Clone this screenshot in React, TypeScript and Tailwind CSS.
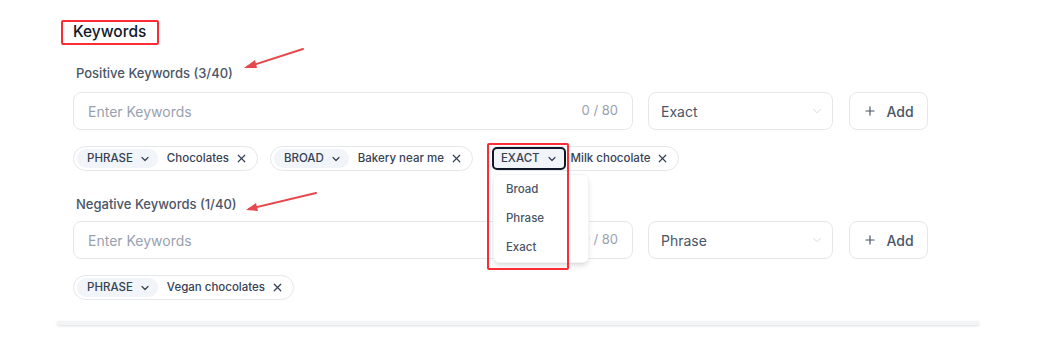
import { ChevronDown, Plus, X } from "lucide-react"

type Chip = { match: string; text: string; focused?: boolean }

const positive: Chip[] = [
  { match: "PHRASE", text: "Chocolates" },
  { match: "BROAD", text: "Bakery near me" },
  { match: "EXACT", text: "Milk chocolate", focused: true },
]

const negative: Chip[] = [{ match: "PHRASE", text: "Vegan chocolates" }]

function KeywordChip({ chip }: { chip: Chip }) {
  return (
    <div
      className={`relative flex h-[25px] items-center rounded-full border border-gray-200 bg-white pr-[9px] ${
        chip.focused ? "pl-[4px]" : "pl-[3px]"
      }`}
    >
      {chip.focused ? (
        <div className="flex h-[23px] items-center gap-[6px] rounded-[5px] border-2 border-gray-900 bg-[#f1f4f9] pl-[7px] pr-[6px] text-[11.5px] font-medium text-gray-700">
          {chip.match}
          <ChevronDown className="h-[12px] w-[12px]" strokeWidth={2.4} />
        </div>
      ) : (
        <div className="flex h-[19px] items-center gap-[6px] rounded-full bg-[#f1f4f9] pl-[10px] pr-[7px] text-[11.5px] font-medium text-gray-700">
          {chip.match}
          <ChevronDown className="h-[12px] w-[12px]" strokeWidth={2.4} />
        </div>
      )}
      <span className={`${chip.focused ? "ml-[5px]" : "ml-[9px]"} text-[11.5px] font-medium text-gray-700`}>{chip.text}</span>
      <X className="ml-[6px] h-[13px] w-[13px] text-gray-700" strokeWidth={2.2} />
      {chip.focused && (
        <div className="absolute left-[5px] top-[27px] z-10 w-[96px] rounded-md border border-gray-100 bg-white shadow-md">
          {["Broad", "Phrase", "Exact"].map((o) => (
            <div key={o} className="flex h-[29px] items-center pl-[12px] text-[11.5px] font-medium text-gray-600">
              {o}
            </div>
          ))}
        </div>
      )}
    </div>
  )
}

function KeywordInput({ value }: { value: string }) {
  return (
    <div className="flex gap-[15px]">
      <div className="flex h-[38px] w-[560px] items-center justify-between rounded-lg border border-gray-200 px-[14px]">
        <span className="text-[14px] text-gray-400">Enter Keywords</span>
        <span className="text-[13px] text-gray-400">0 / 80</span>
      </div>
      <div className="flex h-[38px] w-[185px] items-center justify-between rounded-lg border border-gray-200 pl-[12px] pr-[8px]">
        <span className="text-[14px] text-gray-600">{value}</span>
        <ChevronDown className="h-[14px] w-[14px] text-gray-300" strokeWidth={1.5} />
      </div>
      <button className="ml-[1px] flex h-[38px] w-[79px] items-center justify-center gap-[9px] rounded-lg border border-gray-200 text-[14px] font-medium text-gray-600">
        <Plus className="h-[14px] w-[14px]" strokeWidth={2} />
        Add
      </button>
    </div>
  )
}

export default function App() {
  return (
    <div
      className="relative h-[349px] w-[1048px] overflow-hidden bg-white"
      style={{ fontFamily: "Inter, 'Noto Sans', sans-serif" }}
    >
      <div className="pl-[73px] pt-[22px]">
        <h2 className="text-[15.5px] font-medium leading-[20px] text-gray-900">Keywords</h2>
        <p className="mt-[23px] pl-[3px] text-[13px] font-medium leading-[16px] text-gray-600">Positive Keywords (3/40)</p>
        <div className="mt-[11px]">
          <KeywordInput value="Exact" />
        </div>
        <div className="mt-[16px] flex">
          <KeywordChip chip={positive[0]} />
          <div className="ml-[12px]">
            <KeywordChip chip={positive[1]} />
          </div>
          <div className="ml-[14px]">
            <KeywordChip chip={positive[2]} />
          </div>
        </div>
        <p className="mt-[25px] pl-[3px] text-[13px] font-medium leading-[16px] text-gray-600">Negative Keywords (1/40)</p>
        <div className="mt-[9px]">
          <KeywordInput value="Phrase" />
        </div>
        <div className="mt-[16px] flex gap-[12px]">
          {negative.map((c) => (
            <KeywordChip key={c.text} chip={c} />
          ))}
        </div>
      </div>

      <div className="absolute left-[57px] top-[321px] h-[4px] w-[922px] bg-gray-100 shadow-sm" />

      {/* annotations */}
      <div className="absolute left-[61px] top-[20px] h-[25px] w-[98px] rounded-[2px] border-2 border-red-500" />
      <div className="absolute left-[487px] top-[143px] z-20 h-[127px] w-[82px] rounded-[2px] border-2 border-red-500" />
      <svg className="absolute left-0 top-0 z-20" width="1048" height="349">
        <g stroke="#e5484d" strokeWidth="2" fill="none" strokeLinecap="round">
          <line x1="303" y1="49" x2="247" y2="67" />
          <line x1="316" y1="193" x2="249" y2="209" />
        </g>
        <g fill="#e5484d">
          <polygon points="244,68 255,60 257,68" />
          <polygon points="246,210 256,203 258,211" />
        </g>
      </svg>
    </div>
  )
}
